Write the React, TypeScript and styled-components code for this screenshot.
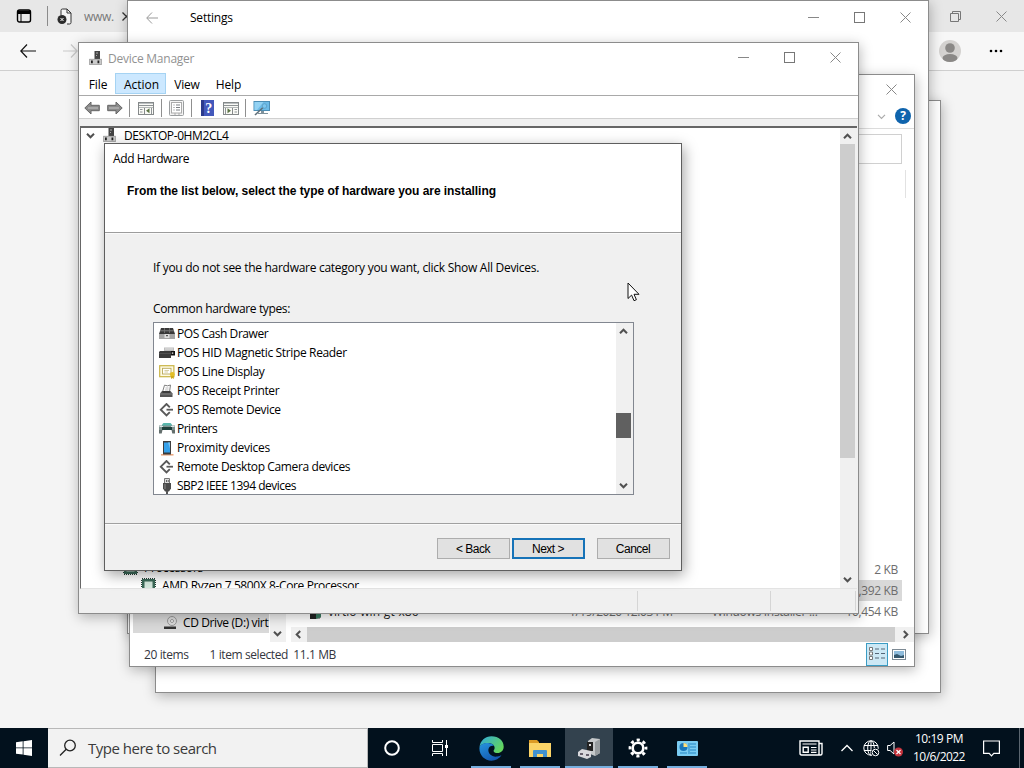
import React from "react";
import styled, { createGlobalStyle, css } from "styled-components";

const GlobalStyle = createGlobalStyle`
  * { box-sizing: border-box; }
  body {
    margin: 0;
    overflow: hidden;
    font-family: 'Open Sans', 'Noto Sans', sans-serif;
    font-size: 12px;
    color: #000;
  }
  svg { display: block; flex: none; }
`

const Desktop = styled.div`
  position: relative;
  width: 1024px;
  height: 768px;
  display: flex;
  flex-direction: column;
  overflow: hidden;
  background: #f4f4f4;
`

const Label = styled.span<{ $ls?: number, $color?: string, $size?: number }>`
  white-space: nowrap;
  letter-spacing: ${p => p.$ls ?? -0.35}px;
  font-size: ${p => p.$size ?? 12}px;
  color: ${p => p.$color ?? "inherit"};
`
const Spacer = styled.div`
  flex: 1;
`
const Gap = styled.div<{ $size: number }>`
  flex: 0 0 ${p => p.$size}px;
`

/* browser behind everything */

const Browser = styled.div`
  flex: 1;
  display: flex;
  flex-direction: column;
`
const TabStrip = styled.div`
  height: 32px;
  display: flex;
  align-items: center;
  background: #e7e7e7;
  padding: 0 16px;
`
const TabDivider = styled.div`
  width: 1px;
  height: 20px;
  margin: 0 9px 0 15px;
  background: #8b8b8b;
`
const TabTitle = styled(Label)`
  margin: 0 8px 0 11px;
`
const AddressRow = styled.div`
  height: 39px;
  display: flex;
  align-items: center;
  padding: 0 20px;
  background: #f7f7f7;
  border-bottom: 1px solid #cfcfcf;
`

/* windows */

const Window = styled.div<{ $x: number, $y: number, $w: number, $h: number }>`
  position: absolute;
  left: ${p => p.$x}px;
  top: ${p => p.$y}px;
  width: ${p => p.$w}px;
  height: ${p => p.$h}px;
  display: flex;
  flex-direction: column;
  background: #fff;
  border: 1px solid #8c8c8c;
  box-shadow: 1px 3px 12px rgba(0, 0, 0, 0.28);
`
const TitleBar = styled.div<{ $h: number, $left: number }>`
  height: ${p => p.$h}px;
  flex: none;
  display: flex;
  align-items: center;
  padding-left: ${p => p.$left}px;
`
const Caption = styled.div`
  display: flex;
  margin-left: auto;
  gap: 35px;
  padding: 0 17px 1px 0;
`

/* explorer */

const RibbonRow = styled.div`
  height: 25px;
  display: flex;
  align-items: center;
  justify-content: flex-end;
  gap: 9px;
  padding-right: 3px;
  border-bottom: 1px solid #dcdcdc;
`
const ExplorerSearch = styled.div`
  height: 30px;
  margin: 5px 12px 0 400px;
  border: 1px solid #d0d0d0;
`
const HeaderDivider = styled.div`
  align-self: flex-end;
  width: 1px;
  height: 28px;
  margin: 6px 8px 0 0;
  background: #e2e2e2;
`
const ExplorerBody = styled.div`
  flex: 1;
  display: flex;
  align-items: flex-end;
`
const NavPane = styled.div`
  width: 157px;
  height: 30px;
  display: flex;
`
const NavItem = styled.div`
  width: 136px;
  height: 21px;
  margin: 0 1px 0 3px;
  padding: 0 0 0 30px;
  display: flex;
  align-items: center;
  gap: 5px;
  background: #d9d9d9;
`
const NavScroll = styled.div`
  width: 16px;
  display: flex;
  align-items: flex-end;
  justify-content: center;
  padding: 0 2px 4px 0;
  background: #f0f0f0;
`
const FileArea = styled.div`
  flex: 1;
  display: flex;
  flex-direction: column;
  padding-left: 4px;
`
const FileRow = styled.div<{ $selected?: boolean }>`
  height: 21px;
  margin-right: 12px;
  padding-right: 4px;
  display: grid;
  grid-template-columns: 18px 19px 241px 143px 104px 1fr;
  align-items: center;
  color: #6d6d6d;
  background: ${p => p.$selected ? "#d9d9d9" : "transparent"};
`
const FileSize = styled(Label)`
  grid-column: 6;
  justify-self: end;
`
const HScroll = styled.div`
  height: 15px;
  margin-top: 5px;
  padding: 0 4px 0 3px;
  display: flex;
  align-items: center;
  background: #f0f0f0;
`
const HThumb = styled.div`
  flex: 1;
  height: 15px;
  margin: 0 6px 0 4px;
  background: #cdcdcd;
`
const ExplorerStatus = styled.div`
  height: 24px;
  flex: none;
  display: flex;
  align-items: center;
  padding-left: 14px;
  color: #33363e;
`
const ViewButton = styled.div<{ $active?: boolean }>`
  width: 22px;
  height: 23px;
  display: grid;
  place-items: center;
  border: 1px solid ${p => p.$active ? "#3b9cc4" : "transparent"};
  background: ${p => p.$active ? "#cce8f5" : "transparent"};
`

/* device manager */

const MenuBar = styled.div`
  height: 23px;
  display: flex;
  padding-left: 1px;
  border-bottom: 1px solid #a9a9a9;
`
const MenuItem = styled.div<{ $active?: boolean, $w: number }>`
  width: ${p => p.$w}px;
  height: 21px;
  padding: 1px 0 0 1px;
  display: flex;
  align-items: center;
  justify-content: center;
  ${p => p.$active && css`
    padding-left: 2px;
    background: #cce8ff;
    border: 1px solid #a5d3f3;
  `}
`
const ToolBar = styled.div`
  height: 23px;
  display: flex;
  align-items: center;
  padding: 2px 0 0 5px;
  border-bottom: 1px solid #d0d0d0;
`
const ToolDivider = styled.div<{ $l: number, $r: number }>`
  width: 1px;
  height: 18px;
  margin: 0 ${p => p.$r}px 0 ${p => p.$l}px;
  background: #8f8f8f;
`
const Workspace = styled.div`
  flex: 1;
  display: flex;
  flex-direction: column;
  padding: 7px 1px 0;
  background: #f0f0f0;
`
const TreeFrame = styled.div`
  height: 463px;
  display: flex;
  overflow: hidden;
  border: 1px solid #666;
  border-width: 2px 0 1px 1px;
  border-bottom-color: #e3e3e3;
  background: #fff;
`
const Tree = styled.div`
  flex: 1;
  display: flex;
  flex-direction: column;
  margin: -2px 0 -6px;
`
const TreeRow = styled.div<{ $indent: number, $gap?: number }>`
  height: 18px;
  flex: none;
  display: flex;
  align-items: center;
  gap: ${p => p.$gap ?? 6}px;
  padding-left: ${p => p.$indent}px;
`
const VScroll = styled.div`
  width: 17px;
  display: flex;
  flex-direction: column;
  align-items: center;
  padding: 4px 2px 4px 0;
  background: #f0f0f0;
`
const VThumb = styled.div<{ $top: number, $h: number, $dark?: boolean }>`
  width: 15px;
  height: ${p => p.$h}px;
  margin-top: ${p => p.$top}px;
  margin-bottom: auto;
  background: ${p => p.$dark ? "#606060" : "#cdcdcd"};
`
const StatusCells = styled.div`
  height: 22px;
  display: grid;
  grid-template-columns: 558px 133px 85px;
  padding-top: 2px;
`
const StatusCell = styled.div`
  border-right: 1px solid #d5d5d5;
`

/* add hardware wizard */

const Dialog = styled(Window)`
  border-color: #5e5e5e;
  background: #f0f0f0;
  box-shadow: 2px 4px 13px rgba(0, 0, 0, 0.36);
`
const WizardHead = styled.div`
  height: 89px;
  padding: 6px 8px;
  display: flex;
  flex-direction: column;
  border-bottom: 1px solid #9c9c9c;
  background: #fff;
`
const Heading = styled.div`
  margin: 17px 0 0 14px;
  font-family: 'Liberation Sans', Arial, sans-serif;
  font-weight: bold;
  font-size: 12px;
  line-height: 14px;
  letter-spacing: -0.05px;
  white-space: nowrap;
`
const WizardBody = styled.div`
  height: 291px;
  padding: 25px 47px 0 48px;
  display: flex;
  flex-direction: column;
  border-top: 1px solid #fafafa;
  border-bottom: 1px solid #a0a0a0;
`
const ListBox = styled.div`
  height: 173px;
  margin-top: 5px;
  display: flex;
  border: 1px solid #828790;
  background: #fff;
`
const List = styled.div`
  flex: 1;
  padding: 1px 0 0 5px;
`
const ListItem = styled.div`
  height: 19px;
  display: flex;
  align-items: center;
  gap: 2px;
`
const WizardFoot = styled.div`
  flex: 1;
  display: flex;
  justify-content: flex-end;
  padding: 13px 11px 0 0;
  border-top: 1px solid #fafafa;
`
const Button = styled.button<{ $primary?: boolean, $gap?: number }>`
  width: 73px;
  height: 21px;
  margin: 0 0 0 ${p => p.$gap ?? 0}px;
  padding: 0 1px 0 0;
  font-family: 'Liberation Sans', Arial, sans-serif;
  font-size: 12px;
  letter-spacing: -0.5px;
  color: #000;
  background: #e1e1e1;
  border: ${p => p.$primary ? "2px solid #1673b8" : "1px solid #adadad"};
`
const Pointer = styled.svg`
  position: absolute;
  left: 627px;
  top: 282px;
`

/* taskbar */

const TaskBar = styled.div`
  height: 40px;
  display: flex;
  background: #02111d;
`
const TaskButton = styled.div<{ $running?: boolean, $active?: boolean }>`
  width: 48px;
  margin-right: ${p => p.$running ? 1 : 0}px;
  display: flex;
  flex-direction: column;
  align-items: center;
  justify-content: center;
  background: ${p => p.$active ? "#33424e" : "transparent"};
  ${p => p.$running && css`
    padding-top: 2px;
    &::after {
      content: "";
      width: ${p.$active ? 48 : 40}px;
      height: 2px;
      margin-top: auto;
      background: #76aede;
    }
    svg { margin-top: auto; }
  `}
`
const SearchField = styled.div`
  width: 320px;
  display: flex;
  align-items: center;
  gap: 11px;
  padding-left: 11px;
  border: 1px solid #b8b8b8;
  border-left: none;
  background: #f2f2f2;
`
const RunningApps = styled.div`
  display: flex;
  margin-left: 3px;
`
const Tray = styled.div`
  margin-left: auto;
  display: flex;
  align-items: center;
  color: #fff;
`
const Clock = styled.div`
  width: 62px;
  margin: 0 13px 0 4px;
  display: flex;
  flex-direction: column;
  align-items: center;
  line-height: 18px;
`
const ShowDesktop = styled.div`
  width: 5px;
  height: 40px;
  margin-left: 19px;
  border-left: 1px solid #5b6670;
`

const Minimize = () =>
  <svg width="11" height="11"><path d="M0 5.5h11" stroke="#888" /></svg>
const Maximize = () =>
  <svg width="11" height="11"><rect x=".5" y=".5" width="10" height="10" fill="none" stroke="#777" /></svg>
const Close = () =>
  <svg width="11" height="11"><path d="M.5 .5l10 10M10.5 .5l-10 10" stroke="#888" /></svg>

const Chevron = ({ dir, thin, color = "#505050" }: { dir: "up" | "down" | "left" | "right", thin?: boolean, color?: string }) => {
  const angle = { up: 0, right: 90, down: 180, left: 270 }[dir]
  return (
    <svg width="9" height="9" viewBox="0 0 9 9">
      <path d="M1 6.2L4.5 2.7L8 6.2" transform={`rotate(${angle} 4.5 4.5)`} fill="none" stroke={color} strokeWidth={thin ? 1.2 : 2} />
    </svg>
  )
}

const ComputerIcon = () =>
  <svg width="13" height="16" viewBox="0 0 13 16">
    <path d="M5.500 1H11v8H5.500z" fill="#444" />
    <path d="M7 2.500h2v1H7zM7 5h1v1H7z" fill="#aaa" />
    <path d="M.3 9.300h12.400v5.200H.3z" fill="#cbcbcb" stroke="#808080" strokeWidth=".6" />
    <path d="M2 10.500h1.800v2.800H2zM8.500 10.500h1.800v2.800H8.500z" fill="#222" />
  </svg>

const ToolArrow = ({ right }: { right?: boolean }) =>
  <svg width="16" height="14" viewBox="0 0 16 14">
    <g transform={right ? "matrix(-1 0 0 1 16 0)" : undefined}>
      <path d="M.8 7L7 1v3.300h8.300v5.400H7V13z" fill="#8b8b8b" stroke="#666" />
      <path d="M4 7h10" stroke="#a8a8a8" strokeWidth="2" />
    </g>
  </svg>

const PanelIcon = ({ flip }: { flip?: boolean }) =>
  <svg width="16" height="13" viewBox="0 0 16 13">
    <rect x=".5" y=".5" width="15" height="12" fill="#fafaf6" stroke="#85898a" />
    <path d="M1 1.500h14" stroke="#bcc0c2" />
    <path d="M1 3.500h14" stroke="#8d9294" />
    <path d="M1 5.500h14" stroke="#b4b8b9" />
    <path d={flip ? "M9.500 6v6" : "M6.500 6v6"} stroke="#85898a" />
    <path d={flip ? "M11.500 7.500h2.500M11.500 10h2.500M2.500 6v6" : "M2 7.500h2.500M2 10h2.500M13.500 6v6"} stroke="#909598" />
    <path d={flip ? "M4.500 6.300v5l3.500-2.500z" : "M11.500 6.300v5L8 8.800z"} fill="#5b7344" />
  </svg>

const PropertiesIcon = () =>
  <svg width="15" height="16" viewBox="0 0 15 16">
    <rect x=".5" y=".5" width="14" height="15" rx="1" fill="#f4f4f4" stroke="#9a9d9f" />
    <rect x="2.500" y="2.500" width="10" height="10.500" fill="#fff" stroke="#aaa" />
    <path d="M4.500 5h1M7 5h4M4.500 7.500h1M7 7.500h4M4.500 10h1M7 10h4" stroke="#7b7f83" />
    <path d="M5 14h2M9 14h2" stroke="#aaa" />
  </svg>

const HelpBookIcon = () =>
  <svg width="13" height="16" viewBox="0 0 13 16">
    <rect width="13" height="16" fill="#4358bb" />
    <path d="M0 0h3v16H0z" fill="#2b3a8c" />
    <text x="7.800" y="12.700" textAnchor="middle" fontFamily="Liberation Serif, serif" fontWeight="bold" fontSize="14" fill="#fff">?</text>
  </svg>

const ScanIcon = () =>
  <svg width="18" height="16" viewBox="0 0 18 16">
    <rect x="1" y="1.500" width="15.500" height="9" fill="#6cbbe8" stroke="#4b8db4" />
    <path d="M1.500 2h9L4 10H1.500z" fill="#93d2f3" />
    <path d="M8 11h3v2H8z" fill="#7f929c" />
    <path d="M5 13.500h10" stroke="#7f929c" />
    <path d="M2 15l8-7.500" stroke="#5e6e78" strokeWidth="1.600" />
    <circle cx="11.500" cy="6" r="2.300" fill="#7cc6ef" stroke="#5a9cc0" strokeWidth=".8" />
  </svg>

const ChipIcon = () =>
  <svg width="15" height="15" viewBox="0 0 15 15">
    <rect x="1" y="1" width="13" height="13" fill="#2f5e4f" stroke="#263c34" strokeWidth="2" strokeDasharray="1 1" />
    <path d="M1 1h13v13H1z" fill="#3c6a59" />
    <rect x="3.500" y="3.500" width="8" height="8" fill="#d5e8de" />
  </svg>

const CashDrawerIcon = () =>
  <svg width="16" height="14" viewBox="0 0 16 14">
    <path d="M2 1h12l2 6H0z" fill="#383838" />
    <path d="M1 3.800h14" stroke="#8f8f8f" strokeWidth=".8" />
    <path d="M5.500 1v5M10.500 1v5" stroke="#777" strokeWidth=".8" />
    <path d="M0 7h16v5H0z" fill="#a4a4a4" />
    <path d="M5.500 7h5v4h-5z" fill="#dedede" />
    <path d="M7 8h2v1.300H7z" fill="#555" />
  </svg>
const StripeReaderIcon = () =>
  <svg width="16" height="14" viewBox="0 0 16 14">
    <path d="M5 1.500h10v5H5z" fill="#bdbdbd" />
    <path d="M6 3h8" stroke="#e4e4e4" />
    <path d="M0 6l1-1h11v7H0z" fill="#3b3b3b" />
    <path d="M0 7.500h12" stroke="#505050" />
    <path d="M12 5h4v4.500h-4z" fill="#111" />
    <path d="M12.800 6.500h1.500v1.200h-1.500z" fill="#fff" />
  </svg>
const LineDisplayIcon = () =>
  <svg width="16" height="14" viewBox="0 0 16 14">
    <rect x=".7" y=".7" width="14.200" height="11" fill="#fefae3" stroke="#c9b445" strokeWidth="1.200" />
    <rect x="3.500" y="3.300" width="8.500" height="5.700" fill="#fff" stroke="#b9a95a" strokeWidth=".9" />
    <path d="M5.500 5.500h4.500M5.500 7h3.500" stroke="#c6ba80" strokeWidth=".7" />
    <circle cx="13.300" cy="9.500" r="2.400" fill="#e3bf27" />
    <path d="M12 11h2.800v3l-1.400-1-1.400 1z" fill="#d0aa18" />
  </svg>
const ReceiptPrinterIcon = () =>
  <svg width="16" height="14" viewBox="0 0 16 14">
    <path d="M3.500 8L5.500 1.200q3 1.300 6-.2L10.500 8" fill="#fff" stroke="#808080" />
    <path d="M6.500 4h3M6 6h3.500" stroke="#aaa" strokeWidth=".8" />
    <path d="M1 9.500L3 7h8.500l2 2.500V13H1z" fill="#555" />
    <path d="M1 10h12.500" stroke="#8b8b8b" strokeWidth=".8" />
    <path d="M3.500 8h7.500" stroke="#222" />
  </svg>
const RemoteIcon = () =>
  <svg width="16" height="14" viewBox="0 0 16 14">
    <path d="M10.800 4.300L7.500 1L1.800 6.700l5.700 5.700L10.800 9.100" fill="none" stroke="#5a5a5a" strokeWidth="1.900" />
    <path d="M7.500 6.700h6.500" stroke="#5a5a5a" strokeWidth="1.800" />
  </svg>
const PrinterIcon = () =>
  <svg width="16" height="14" viewBox="0 0 16 14">
    <path d="M3 2.500L4.500 1h7L13 2.500V5H3z" fill="#59b6ac" />
    <path d="M0 3.500h16V8H0z" fill="#7e9290" />
    <path d="M.5 4.500h3.500M12 4.500h3.500" stroke="#dfe8e7" />
    <path d="M3 5h10v3H3z" fill="#20403b" />
    <path d="M4 8h8l.8 3.500H3.200z" fill="#fff" />
    <path d="M0 8h3.500l-.8 3.500H0zM12.500 8H16v3.500h-2.700z" fill="#636e6c" />
  </svg>
const PhoneIcon = () =>
  <svg width="16" height="16" viewBox="0 0 16 16">
    <path d="M2 14.800h12.500" stroke="#eba57a" strokeWidth="1.500" />
    <rect x="4" y="1" width="8" height="13.500" fill="#3d3d3d" />
    <path d="M5 2.500h6v10H5z" fill="#35a1ea" />
    <path d="M9 2.500h2v6z" fill="#7cc4f2" />
  </svg>
const PlugIcon = () =>
  <svg width="16" height="16" viewBox="0 0 16 16">
    <path d="M5.500 .5h5v5h-5z" fill="#ddd" stroke="#777" />
    <path d="M7 2h.8v2H7zM8.800 2h.8v2h-.8z" fill="#444" />
    <path d="M4 5h8v5.500l-2 3H6l-2-3z" fill="#4b4b4b" />
    <path d="M7 13h2v3H7z" fill="#555" />
    <path d="M6 6v5" stroke="#8a8a8a" />
  </svg>

const hardware = [
  { name: "POS Cash Drawer", Icon: CashDrawerIcon, ls: -0.45 },
  { name: "POS HID Magnetic Stripe Reader", Icon: StripeReaderIcon, ls: -0.35 },
  { name: "POS Line Display", Icon: LineDisplayIcon, ls: -0.36 },
  { name: "POS Receipt Printer", Icon: ReceiptPrinterIcon, ls: -0.36 },
  { name: "POS Remote Device", Icon: RemoteIcon, ls: -0.36 },
  { name: "Printers", Icon: PrinterIcon, ls: -0.5 },
  { name: "Proximity devices", Icon: PhoneIcon, ls: -0.27 },
  { name: "Remote Desktop Camera devices", Icon: RemoteIcon, ls: -0.38 },
  { name: "SBP2 IEEE 1394 devices", Icon: PlugIcon, ls: -0.49 },
]

const BrowserWindow = () =>
  <Browser>
    <TabStrip>
      <svg width="16" height="16" viewBox="0 0 16 16">
        <rect x="1.500" y="2" width="13" height="12" rx="2" fill="none" stroke="#000" strokeWidth="1.400" />
        <path d="M2 2.500h12V6H2z" />
        <path d="M5 6v8" stroke="#000" />
      </svg>
      <TabDivider />
      <svg width="16" height="17" viewBox="0 0 16 17">
        <path d="M4 7V2.500a1.500 1.500 0 0 1 1.500-1.500H10l4 4v9.500a1.500 1.500 0 0 1-1.500 1.500H10" fill="#f4f4f4" stroke="#333" />
        <path d="M10 1v4h4" fill="none" stroke="#333" />
        <circle cx="5" cy="11.500" r="4.500" fill="#2b2b2b" />
        <path d="M3.500 10l3 3M6.500 10l-3 3" stroke="#fff" />
      </svg>
      <TabTitle $ls={-0.3} $color="#777">www.</TabTitle>
      <svg width="8" height="9" viewBox="0 0 8 9"><path d="M.5 .5l4 4l-4 4M8 1l-3.500 3.500l3.500 3.500" fill="none" stroke="#333" strokeWidth="1.300" /></svg>
      <Spacer />
      <svg width="11" height="11"><path d="M.5 2.500h8v8h-8zM2.500 2.500V.5h8v8H8.500" fill="none" stroke="#777" /></svg>
      <Gap $size={35} />
      <Close />
      <Gap $size={1} />
    </TabStrip>
    <AddressRow>
      <svg width="16" height="14" viewBox="0 0 16 14"><path d="M7 .5L.8 7L7 13.500M1 7h15" fill="none" stroke="#111" strokeWidth="1.200" /></svg>
      <Gap $size={26} />
      <svg width="16" height="14" viewBox="0 0 16 14"><path d="M9 .5L15.200 7L9 13.500M1 7h14" fill="none" stroke="#c9c9c9" strokeWidth="1.200" /></svg>
      <Spacer />
      <svg width="22" height="22" viewBox="0 0 22 22">
        <circle cx="11" cy="11" r="11" fill="#d4d2d0" />
        <circle cx="11" cy="8" r="4.800" fill="#8a8886" />
        <ellipse cx="11" cy="18" rx="7.500" ry="4" fill="#8a8886" />
      </svg>
      <Gap $size={28} />
      <svg width="14" height="4"><circle cx="2" cy="2" r="1.300" /><circle cx="7" cy="2" r="1.300" /><circle cx="12" cy="2" r="1.300" /></svg>
      <Gap $size={1} />
    </AddressRow>
  </Browser>

const SettingsWindow = () =>
  <Window $x={127} $y={0} $w={802} $h={634}>
    <TitleBar $h={33} $left={18}>
      <svg width="12" height="12" viewBox="0 0 12 12"><path d="M6 .5L.7 6L6 11.500M1 6h11" fill="none" stroke="#999" /></svg>
      <Gap $size={32} />
      <Label $ls={-0.22}>Settings</Label>
      <Caption><Minimize /><Maximize /><Close /></Caption>
    </TitleBar>
  </Window>

const ExplorerWindow = () =>
  <Window $x={129} $y={74} $w={786} $h={593}>
    <TitleBar $h={29} $left={0}>
      <Caption><Close /></Caption>
    </TitleBar>
    <RibbonRow>
      <Chevron dir="down" thin color="#aaa" />
      <svg width="16" height="16" viewBox="0 0 16 16">
        <circle cx="8" cy="8" r="8" fill="#0f64ad" />
        <text x="8" y="12.300" textAnchor="middle" fontFamily="Open Sans, sans-serif" fontWeight="bold" fontSize="12" fill="#fff">?</text>
      </svg>
    </RibbonRow>
    <ExplorerSearch />
    <HeaderDivider />
    <ExplorerBody>
      <NavPane>
        <NavItem>
          <svg width="15" height="14" viewBox="0 0 15 14">
            <circle cx="9" cy="5" r="4.500" fill="#ddd" stroke="#999" />
            <circle cx="9" cy="5" r="1.500" fill="#fff" stroke="#999" />
            <path d="M1 10.500h12v2.500H1z" fill="#333" />
          </svg>
          <Label $ls={-0.38}>CD Drive (D:) virt</Label>
        </NavItem>
        <NavScroll><Chevron dir="down" /></NavScroll>
      </NavPane>
      <FileArea>
        <FileRow><FileSize>2 KB</FileSize></FileRow>
        <FileRow $selected><FileSize>11,392 KB</FileSize></FileRow>
        <FileRow>
          <span />
          <svg width="14" height="17" viewBox="0 0 14 17">
            <path d="M2 1h9v14H2z" fill="#e8f1ec" stroke="#444" />
            <path d="M1 10h6v6H1z" fill="#222" />
            <path d="M7 9l5-3v8l-5 2z" fill="#3a7c62" />
          </svg>
          <Label $color="#222" $ls={0}>virtio-win-gt-x86</Label>
          <Label $ls={-0.45}>1/19/2020 12:03 PM</Label>
          <Label $ls={-0.3}>Windows Installer ...</Label>
          <FileSize>10,454 KB</FileSize>
        </FileRow>
        <HScroll><Chevron dir="left" /><HThumb /><Chevron dir="right" /></HScroll>
      </FileArea>
    </ExplorerBody>
    <ExplorerStatus>
      <Label $ls={-0.4}>20 items</Label>
      <Gap $size={21} />
      <Label $ls={-0.41}>1 item selected&nbsp; 11.1 MB</Label>
      <Spacer />
      <ViewButton $active>
        <svg width="17" height="14" viewBox="0 0 17 14">
          <path d="M.5 .5h3v3h-3zM.5 5h3v3h-3zM.5 9.500h3v3h-3z" fill="#fff" stroke="#777" />
          <path d="M6 2h4M12 2h4M6 6.500h4M12 6.500h4M6 11h4M12 11h4" stroke="#567" />
        </svg>
      </ViewButton>
      <ViewButton>
        <svg width="14" height="11" viewBox="0 0 14 11">
          <rect x=".5" y=".5" width="13" height="10" fill="#fff" stroke="#7d8a94" />
          <path d="M2 2h10v7H2z" fill="#8fbcdc" />
          <path d="M2 6l3-1 4 2 3-1v3H2z" fill="#35586e" />
        </svg>
      </ViewButton>
      <Gap $size={4} />
    </ExplorerStatus>
  </Window>

const DeviceManager = () =>
  <Window $x={78} $y={42} $w={781} $h={572}>
    <TitleBar $h={30} $left={10}>
      <ComputerIcon />
      <Gap $size={6} />
      <Label $ls={-0.25} $color="#929292">Device Manager</Label>
      <Caption><Minimize /><Maximize /><Close /></Caption>
    </TitleBar>
    <MenuBar>
      <MenuItem $w={35}><Label $ls={-0.1}>File</Label></MenuItem>
      <MenuItem $w={51} $active><Label $ls={-0.05}>Action</Label></MenuItem>
      <MenuItem $w={41}><Label $ls={-0.2}>View</Label></MenuItem>
      <MenuItem $w={42}><Label $ls={-0.1}>Help</Label></MenuItem>
    </MenuBar>
    <ToolBar>
      <ToolArrow />
      <Gap $size={7} />
      <ToolArrow right />
      <ToolDivider $l={6} $r={8} />
      <PanelIcon />
      <ToolDivider $l={7} $r={7} />
      <PropertiesIcon />
      <ToolDivider $l={7} $r={9} />
      <HelpBookIcon />
      <Gap $size={9} />
      <PanelIcon flip />
      <ToolDivider $l={6} $r={7} />
      <ScanIcon />
    </ToolBar>
    <Workspace>
      <TreeFrame>
        <Tree>
          <TreeRow $indent={5} $gap={8}>
            <Chevron dir="down" />
            <ComputerIcon />
            <Label $ls={-0.4}>DESKTOP-0HM2CL4</Label>
          </TreeRow>
          <Spacer />
          <TreeRow $indent={42}><ChipIcon /><Label $ls={-0.2}>Processors</Label></TreeRow>
          <TreeRow $indent={60}><ChipIcon /><Label $ls={-0.38}>AMD Ryzen 7 5800X 8-Core Processor</Label></TreeRow>
        </Tree>
        <VScroll>
          <Chevron dir="up" />
          <VThumb $top={3} $h={314} />
          <Chevron dir="down" />
        </VScroll>
      </TreeFrame>
      <StatusCells><StatusCell /><StatusCell /><StatusCell /></StatusCells>
    </Workspace>
  </Window>

const AddHardware = () =>
  <Dialog $x={104} $y={143} $w={578} $h={428}>
    <WizardHead>
      <Label $ls={-0.38}>Add Hardware</Label>
      <Heading>From the list below, select the type of hardware you are installing</Heading>
    </WizardHead>
    <WizardBody>
      <Label $ls={-0.28}>If you do not see the hardware category you want, click Show All Devices.</Label>
      <Gap $size={24} />
      <Label $ls={-0.36}>Common hardware types:</Label>
      <ListBox>
        <List>
          {hardware.map(({ name, Icon, ls }) =>
            <ListItem key={name}><Icon /><Label $ls={ls}>{name}</Label></ListItem>)}
        </List>
        <VScroll>
          <Chevron dir="up" />
          <VThumb $dark $top={77} $h={25} />
          <Chevron dir="down" />
        </VScroll>
      </ListBox>
    </WizardBody>
    <WizardFoot>
      <Button>&lt; Back</Button>
      <Button $primary $gap={2}>Next &gt;</Button>
      <Button $gap={12}>Cancel</Button>
    </WizardFoot>
  </Dialog>

const Taskbar = () =>
  <TaskBar>
    <TaskButton>
      <svg width="16" height="16" viewBox="0 0 16 16"><path d="M0 2.200L6.700 1.300V7.500H0zM7.500 1.200L16 0V7.500H7.500zM0 8.300H6.700V14.600L0 13.700zM7.500 8.300H16V16L7.500 14.700z" fill="#fff" /></svg>
    </TaskButton>
    <SearchField>
      <svg width="18" height="18" viewBox="0 0 18 18"><circle cx="11" cy="6.500" r="5.300" fill="none" stroke="#222" strokeWidth="1.300" /><path d="M7.200 10.300L1 16.500" stroke="#222" strokeWidth="1.300" /></svg>
      <Label $size={15} $ls={-0.5} $color="#3b3b3b">Type here to search</Label>
    </SearchField>
    <TaskButton>
      <svg width="16" height="16"><circle cx="8" cy="8" r="6.800" fill="none" stroke="#fff" strokeWidth="2" /></svg>
    </TaskButton>
    <TaskButton>
      <svg width="18" height="16" viewBox="0 0 18 16">
        <path d="M1.500 0v2.500h10V0M1.500 16v-2.500h10V16M1.500 4.500h10v7h-10zM15.500 0v16" fill="none" stroke="#fff" />
        <path d="M14 5h3v3h-3z" fill="#fff" />
      </svg>
    </TaskButton>
    <RunningApps>
      <TaskButton $running>
        <svg width="25" height="25" viewBox="0 0 24 24">
          <defs>
            <linearGradient id="wave" x1="0" y1="0" x2="1" y2=".6"><stop offset="0" stopColor="#2fa9de" /><stop offset="1" stopColor="#64d65c" /></linearGradient>
            <linearGradient id="deep" x1="0" y1="0" x2=".6" y2="1"><stop offset="0" stopColor="#2795de" /><stop offset="1" stopColor="#1358b0" /></linearGradient>
          </defs>
          <path d="M.5 11C1 4.500 6 .3 12 .3c7 0 11.700 4.500 11.700 10 0 3.700-2.700 6-5.700 6-2.500 0-4-1-4-2 0-.8 1-1 1-3 0-2-2.300-4.500-6-4.500C4.500 6.800 1.500 8.500 .5 11z" fill="url(#wave)" />
          <path d="M.4 12C.4 8.500 4 6.700 8.500 6.700c3 0 5 1 6 3-1-.7-5-.7-5.500 3.300-.4 4 3.500 7.500 8.500 6.700 2-.3 3-.8 4-1.200C19.500 21.500 16 23.700 12 23.700 5.500 23.700 .4 18.500 .4 12z" fill="url(#deep)" />
        </svg>
      </TaskButton>
      <TaskButton $running>
        <svg width="22" height="19" viewBox="0 0 22 19">
          <path d="M0 1h8l2 2v4H0z" fill="#dc9b25" />
          <path d="M0 4h22v14H0z" fill="#fbd467" />
          <path d="M4 18v-6q0-1 1-1h12q1 0 1 1v6h-4v-3H8v3z" fill="#4292d0" />
        </svg>
      </TaskButton>
      <TaskButton $running $active>
        <svg width="23" height="21" viewBox="0 0 23 21">
          <path d="M10 3l4-3 8 1v14l-5 3-7-3z" fill="#c5c8ca" />
          <path d="M17 4l5-3v14l-5 3z" fill="#979c9f" />
          <path d="M9 4h6v9H9z" fill="#222" />
          <path d="M11 6h2v2h-2z" fill="#ddd" />
          <path d="M0 14l4-3 9 2v6l-4 2-9-3z" fill="#d9d8dc" />
          <path d="M2 15h3v2H2zM8 16h3v2H8z" fill="#665f6b" />
        </svg>
      </TaskButton>
      <TaskButton $running>
        <svg width="20" height="20" viewBox="0 0 20 20">
          <circle cx="10" cy="10" r="5.300" fill="none" stroke="#fff" strokeWidth="2.600" />
          <circle cx="10" cy="10" r="8" fill="none" stroke="#fff" strokeWidth="2.800" strokeDasharray="3.140 3.140" strokeDashoffset="1.570" />
        </svg>
      </TaskButton>
      <TaskButton $running>
        <svg width="21" height="15" viewBox="0 0 21 15">
          <rect width="21" height="15" rx="1" fill="#7accf2" />
          <circle cx="6.500" cy="6" r="4" fill="#1976b9" />
          <path d="M6.500 6V2a4 4 0 0 1 4 4z" fill="#ffe07b" />
          <path d="M13 3h6M13 6h6M13 9h6M13 12h6M3 12h7" stroke="#2487c4" />
          <path d="M12 2v11" stroke="#2487c4" />
        </svg>
      </TaskButton>
    </RunningApps>
    <Tray>
      <svg width="24" height="16" viewBox="0 0 24 16">
        <path d="M1 1h19v14H2.500Q1 15 1 13.500zM20 3.500h3v10q0 1.500-1.500 1.500H19" fill="none" stroke="#fff" strokeWidth="1.400" />
        <path d="M3.500 4h14M12 7.500h5.500M12 10h5.500M12 12.300h5.500" stroke="#fff" strokeWidth="1.200" />
        <path d="M4.200 7.200h5v5h-5z" fill="none" stroke="#fff" strokeWidth="1.400" />
      </svg>
      <Gap $size={18} />
      <svg width="12" height="8" viewBox="0 0 12 8"><path d="M.5 7L6 1.500L11.500 7" fill="none" stroke="#fff" strokeWidth="1.300" /></svg>
      <Gap $size={10} />
      <svg width="17" height="17" viewBox="0 0 17 17">
        <g fill="none" stroke="#fff">
          <circle cx="8" cy="8" r="7.200" />
          <ellipse cx="8" cy="8" rx="3.300" ry="7.200" />
          <path d="M1 5.500h14M1 10.500h9M8 1v14" />
        </g>
        <circle cx="12.500" cy="12.500" r="4.500" fill="#02111d" />
        <circle cx="12.500" cy="12.500" r="3.300" fill="none" stroke="#fff" />
        <path d="M10.300 10.300l4.400 4.400" stroke="#fff" />
      </svg>
      <Gap $size={7} />
      <svg width="17" height="17" viewBox="0 0 17 17">
        <path d="M.6 5.500h2.500L7 2v12L3.100 10.500H.6z" fill="none" stroke="#fff" />
        <circle cx="11.500" cy="12" r="4.500" fill="#c4323c" />
        <path d="M9.500 10l4 4M13.500 10l-4 4" stroke="#fff" strokeWidth="1.200" />
      </svg>
      <Clock><Label $ls={-0.45}>10:19 PM</Label><Label $ls={-0.55}>10/6/2022</Label></Clock>
      <svg width="17" height="17" viewBox="0 0 17 17"><path d="M.6 1h15.800v12.300H10.800L8.500 15.800L6.200 13.300H.6z" fill="none" stroke="#fff" strokeWidth="1.200" /></svg>
      <ShowDesktop />
    </Tray>
  </TaskBar>

const App = () =>
  <Desktop>
    <GlobalStyle />
    <BrowserWindow />
    <Window $x={155} $y={100} $w={786} $h={593} />
    <SettingsWindow />
    <ExplorerWindow />
    <DeviceManager />
    <AddHardware />
    <Pointer width="13" height="20" viewBox="0 0 13 20">
      <path d="M1 1v15.500l3.600-3.400L7 18.700l2.400-1L7 12.300h5z" fill="#fff" stroke="#111" />
    </Pointer>
    <Taskbar />
  </Desktop>

export default App;
